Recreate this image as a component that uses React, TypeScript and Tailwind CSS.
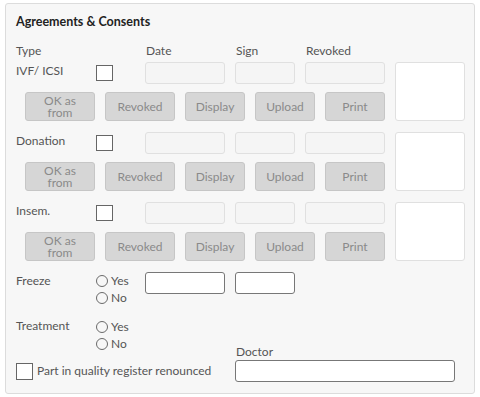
import React from "react";

const font = { fontFamily: "Lato, 'Open Sans', sans-serif" };

const sections = ["IVF/ ICSI", "Donation", "Insem."];

function Btn({ children, wide }: { children: React.ReactNode; wide?: boolean }) {
    return (
        <div
            className={`${wide ? "w-[70px]" : "w-[60px]"} h-[29px] flex items-center justify-center text-center leading-[12px] text-[12px] text-[#8a8a8a] bg-[#d6d6d6] border border-[#c6c6c6] rounded-[3px]`}
        >
            {children}
        </div>
    );
}

function Radio({ label }: { label: string }) {
    return (
        <div className="flex items-center h-[17px] gap-[3px]">
            <span className="w-[12px] h-[12px] rounded-full border border-[#6a6a6a] bg-[#f7f7f7]" />
            <span className="text-[12px] text-[#555]">{label}</span>
        </div>
    );
}

export default function App() {
    return (
        <div className="w-[480px] h-[397px] bg-white pt-[3px] pl-[5px]" style={font}>
            <div className="w-[470px] h-[391px] border border-[#dcdcdc] rounded-[3px] bg-[#f7f7f7] pl-[10px] pt-[9px]">
                {/* Title */}
                <div className="h-[18px] flex items-center text-[12.5px] font-bold text-[#222]">
                    Agreements &amp; Consents
                </div>

                {/* Column headers */}
                <div className="flex h-[16px] mt-[12px] items-center text-[12px] text-[#555]">
                    <span className="w-[130px]">Type</span>
                    <span className="w-[90px]">Date</span>
                    <span className="w-[70px]">Sign</span>
                    <span>Revoked</span>
                </div>

                {/* Consent rows */}
                {sections.map((name, i) => (
                    <div key={name} className={`flex ${i === 0 ? "mt-[3px]" : "mt-[11px]"}`}>
                        <div className="w-[379px]">
                            <div className="flex h-[22px] items-start">
                                <span className="w-[80px] text-[12px] text-[#555] leading-[18px]">{name}</span>
                                <span className="mt-[3px] w-[17px] h-[16px] border border-[#666] bg-white" />
                                <span className="ml-[32px] w-[80px] h-[22px] border border-[#e0e0e0] rounded-[3px] bg-[#f5f5f5]" />
                                <span className="ml-[10px] w-[60px] h-[22px] border border-[#e0e0e0] rounded-[3px] bg-[#f5f5f5]" />
                                <span className="ml-[10px] w-[80px] h-[22px] border border-[#e0e0e0] rounded-[3px] bg-[#f5f5f5]" />
                            </div>
                            <div className="flex gap-[10px] mt-[8px] pl-[9px]">
                                <Btn wide>
                                    OK as
                                    <br />
                                    from
                                </Btn>
                                <Btn wide>Revoked</Btn>
                                <Btn>Display</Btn>
                                <Btn>Upload</Btn>
                                <Btn>Print</Btn>
                            </div>
                        </div>
                        <div className="w-[70px] h-[59px] border border-[#e0e0e0] rounded-[3px] bg-white" />
                    </div>
                ))}

                {/* Freeze */}
                <div className="flex mt-[11px]">
                    <span className="w-[80px] text-[12px] text-[#555] leading-[18px]">Freeze</span>
                    <div className="w-[49px]">
                        <Radio label="Yes" />
                        <Radio label="No" />
                    </div>
                    <span className="w-[80px] h-[22px] border border-[#777] rounded-[3px] bg-white" />
                    <span className="ml-[10px] w-[60px] h-[22px] border border-[#777] rounded-[3px] bg-white" />
                </div>

                {/* Treatment / quality register / doctor */}
                <div className="flex mt-[11px]">
                    <div className="w-[219px]">
                        <div className="flex">
                            <span className="w-[80px] text-[12px] text-[#555] leading-[18px]">Treatment</span>
                            <div className="pt-[1px]">
                                <Radio label="Yes" />
                                <Radio label="No" />
                            </div>
                        </div>
                        <div className="flex items-center h-[22px] mt-[8px] gap-[4px]">
                            <span className="w-[17px] h-[17px] border border-[#666] bg-white" />
                            <span className="text-[12px] text-[#555]">Part in quality register renounced</span>
                        </div>
                    </div>
                    <div className="flex flex-col justify-end">
                        <span className="text-[12px] text-[#555] leading-[16px] pl-[1px]">Doctor</span>
                        <span className="w-[220px] h-[22px] border border-[#777] rounded-[3px] bg-white" />
                    </div>
                </div>
            </div>
        </div>
    );
}
